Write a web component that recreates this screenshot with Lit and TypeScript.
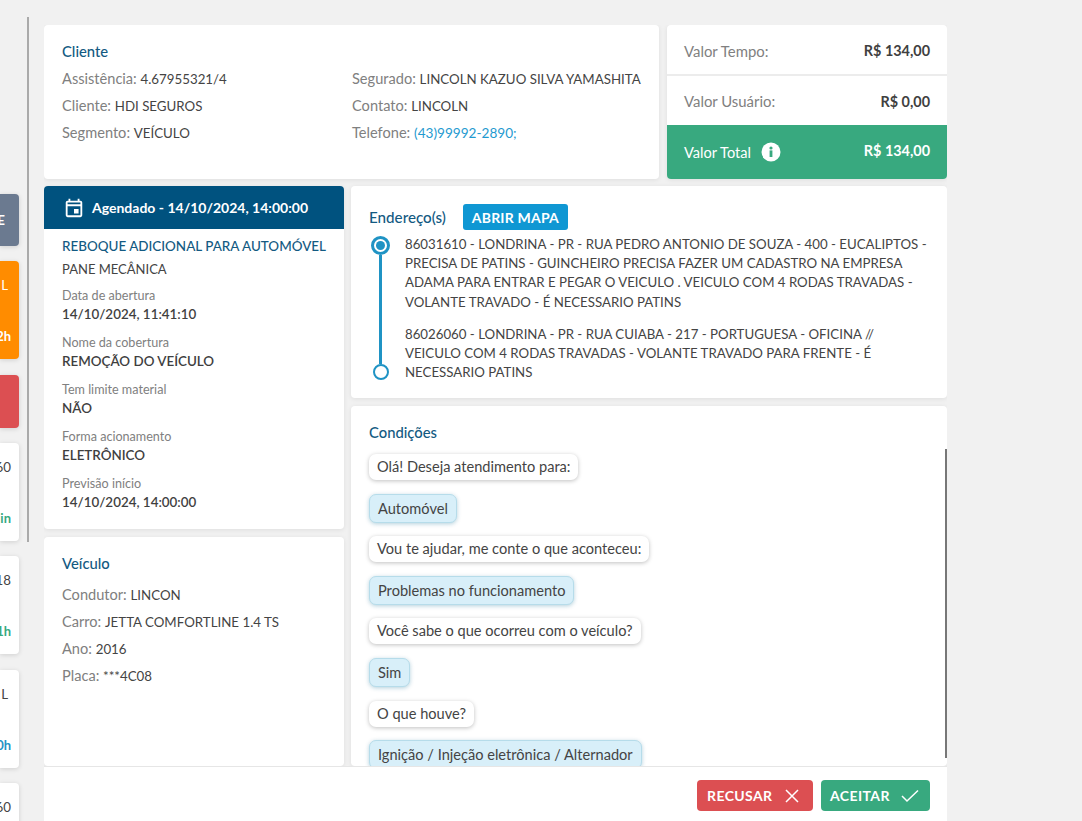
import { LitElement, html, css } from "lit";
import { customElement } from "lit/decorators.js";

const bubbles: [string, boolean][] = [
  ["Olá! Deseja atendimento para:", false],
  ["Automóvel", true],
  ["Vou te ajudar, me conte o que aconteceu:", false],
  ["Problemas no funcionamento", true],
  ["Você sabe o que ocorreu com o veículo?", false],
  ["Sim", true],
  ["O que houve?", false],
  ["Ignição / Injeção eletrônica / Alternador", true],
];

const facts = [
  ["Data de abertura", "14/10/2024, 11:41:10"],
  ["Nome da cobertura", "REMOÇÃO DO VEÍCULO"],
  ["Tem limite material", "NÃO"],
  ["Forma acionamento", "ELETRÔNICO"],
  ["Previsão início", "14/10/2024, 14:00:00"],
];

@customElement("app-root")
export class AppRoot extends LitElement {
  static styles = css`
    :host { display: block; width: 1082px; height: 821px; overflow: hidden; background: #f1f1f1; font-family: "Lato", "Liberation Sans", sans-serif; font-size: 14.6px; color: #444; }
    * { box-sizing: border-box; }
    .page { display: flex; height: 821px; }
    .side { width: 27px; flex: none; padding-top: 194px; display: flex; flex-direction: column; gap: 15.33px; overflow: hidden; }
    .tick { width: 19px; border-radius: 0 4px 4px 0; box-shadow: 0 1px 5px rgba(0,0,0,.14); display: flex; flex-direction: column; justify-content: space-between; align-items: flex-end; padding: 15px 8px 14px 0; background: #fff; flex: none; white-space: nowrap; line-height: 18px; font-size: 13.3px; }
    .tick b { font-size: 13px; }
    .tick .nudge { margin-right: 3px; }
    .h98 { height: 98px; }
    .slate { height: 52px; background: #6b7a90; color: #fff; justify-content: center; padding: 0; }
    .slate span { margin-right: 14px; font-weight: 700; }
    .orange { background: #ff8c00; color: #fff; }
    .red { height: 53px; background: #dc4f52; }
    .grn { color: #38a97f; }
    .blu { color: #1f93c4; }
    .rule { width: 2px; flex: none; height: 525px; margin-top: 17px; background: #aaa; }
    .main { width: 903px; margin-left: 15px; flex: none; height: 821px; display: flex; flex-direction: column; }
    .scroll { height: 741px; margin-top: 25px; flex: none; overflow: hidden; display: grid; grid-template-columns: 300px 596px; grid-template-rows: 154px 1fr; column-gap: 7px; row-gap: 7px; }
    .card { background: #fff; border-radius: 4px; box-shadow: 0 1px 5px rgba(0,0,0,.08); }
    .top { grid-column: 1 / 3; display: grid; grid-template-columns: 615px 280px; gap: 8px; }
    .client { padding: 16px 17px 0 18px; }
    h3 { margin: 0; font-size: 14.8px; font-weight: 500; color: #135a82; line-height: 20px; white-space: nowrap; }
    .cols { display: grid; grid-template-columns: 290px 1fr; }
    .ln { line-height: 27px; white-space: nowrap; height: 27px; }
    .u { font-size: 13.3px; }
    .lab { color: #808080; }
    .link { color: #1f9ad0; font-size: 13.6px; }
    .client .cols { margin-top: 4px; }
    .values { overflow: hidden; display: flex; flex-direction: column; }
    .vrow { height: 49px; padding: 2px 17px 0; display: flex; justify-content: space-between; align-items: center; font-size: 14.9px; }
    .vrow.b { border-top: 2px solid #ececec; height: 51px; padding-top: 1px; }
    .vrow strong { color: #3f3f3f; font-weight: 700; font-size: 14.4px; }
    .total { flex: 1; background: #38a97f; color: #fff; padding: 0 17px; display: flex; justify-content: space-between; align-items: center; }
    .total strong { font-weight: 700; font-size: 14.4px; position: relative; top: -2px; }
    .total span { display: flex; align-items: center; gap: 10px; }
    .col { display: flex; flex-direction: column; gap: 8px; min-height: 0; }
    .ag { height: 343px; overflow: hidden; flex: none; }
    .aghead { height: 43px; background: #00527f; color: #fff; display: flex; align-items: center; gap: 7px; padding-left: 19px; font-weight: 700; font-size: 14px; white-space: nowrap; }
    .agbody { padding: 7px 18px 0; }
    .agtitle { color: #135a82; font-size: 13.45px; font-weight: 500; line-height: 20px; white-space: nowrap; }
    .sub { font-size: 13px; line-height: 20px; margin-top: 3px; }
    .fact { margin-top: 8px; height: 39px; }
    .fact .l { font-size: 12.6px; color: #808080; line-height: 18px; }
    .fact .v { font-size: 13.4px; font-weight: 600; color: #3f3f3f; line-height: 18px; white-space: nowrap; }
    .fact:first-of-type { margin-top: 7px; }
    .veh { flex: 1; padding: 16px 18px 0; }
    .veh .list { margin-top: 8px; }
    .addr { height: 212px; flex: none; padding: 18px 18px 0; }
    .addr-h { display: flex; align-items: center; gap: 17px; height: 26px; }
    .addr-h h3 { font-size: 15.2px; }
    .btn { background: #0f97d3; color: #fff; border: 0; border-radius: 3px; font: inherit; font-size: 14px; font-weight: 700; height: 26px; width: 105px; padding: 0; letter-spacing: .2px; }
    .stops { display: grid; grid-template-columns: 36px 1fr; margin-top: 5px; }
    .rail { display: flex; flex-direction: column; align-items: center; width: 23px; padding: 1px 0 2px; }
    .line { width: 3px; flex: 1; background: #1f93c4; }
    .o1 { width: 19px; height: 19px; border: 3px solid #1f93c4; border-radius: 50%; display: flex; align-items: center; justify-content: center; flex: none; }
    .o1::after { content: ""; width: 9px; height: 9px; border-radius: 50%; background: #1f93c4; }
    .o2 { width: 16px; height: 16px; border: 2px solid #1f93c4; border-radius: 50%; flex: none; }
    .txt { line-height: 19.2px; font-size: 13.25px; }
    .txt p { margin: 0 0 13px; white-space: nowrap; }
    .txt p.last { margin: 0; }
    .cond { flex: 1; padding: 16px 0 0 18px; position: relative; overflow: hidden; }
    .chat { margin-top: 12px; display: flex; flex-direction: column; align-items: flex-start; gap: 13.6px; }
    .bub { height: 26px; line-height: 26px; padding: 0 8px; border-radius: 7px; background: #fff; box-shadow: 0 1px 4px rgba(0,0,0,.25); white-space: nowrap; }
    .bub.a { height: 29px; line-height: 27px; background: #d8eff9; border: 1px solid #b6dcea; box-shadow: 0 1px 4px rgba(0,100,140,.3); }
    .thumb { position: absolute; right: 0; top: 43px; width: 2px; height: 309px; background: #777; }
    .foot { flex: 1; background: #fff; border-top: 1px solid #e6e6e6; display: flex; justify-content: flex-end; align-items: flex-start; gap: 8px; padding: 13px 17px 0 0; }
    .act { height: 31px; border: 0; border-radius: 4px; color: #fff; font: inherit; font-size: 14px; font-weight: 700; letter-spacing: .4px; display: flex; align-items: center; gap: 11px; padding: 0 0 0 10px; }
    .rec { background: #dc4f52; width: 116px; }
    .ace { background: #38a97f; width: 109px; padding-left: 9px; }
  `;

  render() {
    return html`<div class="page">
      <div class="side">
        <div class="tick slate"><span>E</span></div>
        <div class="tick h98 orange"><span class="nudge">L</span><b>2h</b></div>
        <div class="tick red"></div>
        <div class="tick h98"><span>60</span><b class="grn">in</b></div>
        <div class="tick h98"><span>18</span><b class="grn">1h</b></div>
        <div class="tick h98"><span class="nudge">L</span><b class="blu">0h</b></div>
        <div class="tick h98"><span>60</span></div>
      </div>
      <div class="rule"></div>
      <div class="main">
        <div class="scroll">
          <div class="top">
            <section class="card client">
              <h3>Cliente</h3>
              <div class="cols">
                <div>
                  <div class="ln"><span class="lab">Assistência:</span> <span class="u">4.67955321/4</span></div>
                  <div class="ln"><span class="lab">Cliente:</span> <span class="u">HDI SEGUROS</span></div>
                  <div class="ln"><span class="lab">Segmento:</span> <span class="u">VEÍCULO</span></div>
                </div>
                <div>
                  <div class="ln"><span class="lab">Segurado:</span> <span class="u">LINCOLN KAZUO SILVA YAMASHITA</span></div>
                  <div class="ln"><span class="lab">Contato:</span> <span class="u">LINCOLN</span></div>
                  <div class="ln"><span class="lab">Telefone:</span> <span class="link">(43)99992-2890;</span></div>
                </div>
              </div>
            </section>
            <section class="card values">
              <div class="vrow"><span class="lab">Valor Tempo:</span><strong>R$ 134,00</strong></div>
              <div class="vrow b"><span class="lab">Valor Usuário:</span><strong>R$ 0,00</strong></div>
              <div class="total"><span>Valor Total
                <svg width="20" height="20" viewBox="0 0 20 20"><circle cx="10" cy="10" r="9.5" fill="#fff"/><rect x="8.6" y="8.4" width="2.8" height="6.6" fill="#38a97f"/><circle cx="10" cy="6" r="1.6" fill="#38a97f"/></svg>
              </span><strong>R$ 134,00</strong></div>
            </section>
          </div>
          <div class="col">
            <section class="card ag">
              <div class="aghead">
                <svg width="22" height="22" viewBox="0 0 24 24" fill="#fff"><path d="M19 4h-1V2h-2v2H8V2H6v2H5a2 2 0 0 0-2 2v14a2 2 0 0 0 2 2h14a2 2 0 0 0 2-2V6a2 2 0 0 0-2-2zm0 16H5V10h14v10zm0-12H5V6h14v2zm-7 5h5v5h-5z"/></svg>
                Agendado - 14/10/2024, 14:00:00
              </div>
              <div class="agbody">
                <div class="agtitle">REBOQUE ADICIONAL PARA AUTOMÓVEL</div>
                <div class="sub">PANE MECÂNICA</div>
                ${facts.map(([l, v]) => html`<div class="fact"><div class="l">${l}</div><div class="v">${v}</div></div>`)}
              </div>
            </section>
            <section class="card veh">
              <h3>Veículo</h3>
              <div class="list">
                <div class="ln"><span class="lab">Condutor:</span> <span class="u">LINCON</span></div>
                <div class="ln"><span class="lab">Carro:</span> <span class="u">JETTA COMFORTLINE 1.4 TS</span></div>
                <div class="ln"><span class="lab">Ano:</span> <span class="u">2016</span></div>
                <div class="ln"><span class="lab">Placa:</span> <span class="u">***4C08</span></div>
              </div>
            </section>
          </div>
          <div class="col">
            <section class="card addr">
              <div class="addr-h"><h3>Endereço(s)</h3><button class="btn">ABRIR MAPA</button></div>
              <div class="stops">
                <div class="rail"><div class="o1"></div><div class="line"></div><div class="o2"></div></div>
                <div class="txt">
                  <p>86031610 - LONDRINA - PR - RUA PEDRO ANTONIO DE SOUZA - 400 - EUCALIPTOS -<br>PRECISA DE PATINS - GUINCHEIRO PRECISA FAZER UM CADASTRO NA EMPRESA<br>ADAMA PARA ENTRAR E PEGAR O VEICULO . VEICULO COM 4 RODAS TRAVADAS -<br>VOLANTE TRAVADO - É NECESSARIO PATINS</p>
                  <p class="last">86026060 - LONDRINA - PR - RUA CUIABA - 217 - PORTUGUESA - OFICINA //<br>VEICULO COM 4 RODAS TRAVADAS - VOLANTE TRAVADO PARA FRENTE - É<br>NECESSARIO PATINS</p>
                </div>
              </div>
            </section>
            <section class="card cond">
              <h3>Condições</h3>
              <div class="chat">${bubbles.map(([t, a]) => html`<div class="bub ${a ? "a" : ""}">${t}</div>`)}</div>
              <div class="thumb"></div>
            </section>
          </div>
        </div>
        <div class="foot">
          <button class="act rec">RECUSAR
            <svg width="16" height="16" viewBox="0 0 16 16" stroke="#fff" stroke-width="1.5" fill="none"><path d="M2 2l12 12M14 2L2 14"/></svg>
          </button>
          <button class="act ace">ACEITAR
            <svg width="18" height="14" viewBox="0 0 18 14" stroke="#fff" stroke-width="1.5" fill="none"><path d="M1 7l5 5L17 1.5"/></svg>
          </button>
        </div>
      </div>
    </div>`;
  }
}
